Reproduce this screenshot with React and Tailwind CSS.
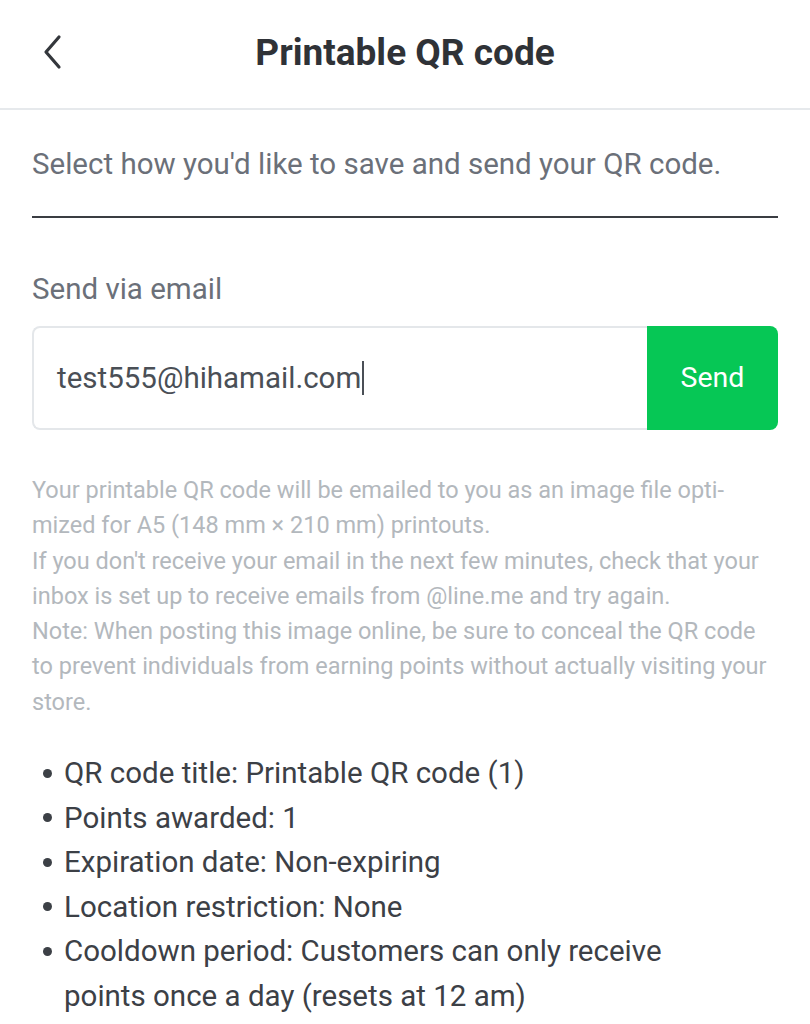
import React from 'react'

const items = [
  'QR code title: Printable QR code (1)',
  'Points awarded: 1',
  'Expiration date: Non-expiring',
  'Location restriction: None',
  'Cooldown period: Customers can only receive points once a day (resets at 12 am)',
]

export default function App() {
  return (
    <div className="min-h-screen w-[810px] bg-white font-['Roboto',sans-serif]">
      {/* Header */}
      <div className="relative flex h-[110px] items-center justify-center border-b-2 border-[#e6e9ec]">
        <button className="absolute left-[36px] top-[32px] flex h-[40px] w-[32px] items-center justify-center">
          <svg width="24" height="36" viewBox="0 0 24 36" fill="none">
            <path d="M19 3 L6 18 L19 33" stroke="#34373c" strokeWidth="3.2" strokeLinecap="round" strokeLinejoin="round" />
          </svg>
        </button>
        <h1 className="-mt-[3px] text-[37px] font-bold text-[#2f3237]">Printable QR code</h1>
      </div>

      <div className="px-8">
        <p className="border-b-2 border-[#3a3d42] pt-[36px] pb-[34px] text-[29.5px] leading-[36px] text-[#6b7079]">
          Select how you'd like to save and send your QR code.
        </p>

        <p className="mt-[53px] text-[29.5px] leading-[36px] text-[#6b7079]">Send via email</p>

        {/* Email input */}
        <div className="mt-[19px] flex h-[104px]">
          <div className="flex flex-1 items-center rounded-l-[8px] border-2 border-r-0 border-[#e4e7ea] pl-[23px]">
            <span className="text-[29.5px] text-[#4a4f56]">test555@hihamail.com</span>
            <span className="ml-[1px] h-[34px] w-[2px] bg-[#4a4f56]" />
          </div>
          <button className="flex w-[131px] items-center justify-center rounded-r-[8px] bg-[#06c755] text-[28.5px] text-white">
            Send
          </button>
        </div>

        {/* Help text */}
        <div className="mt-[43px] text-[23.5px] leading-[35.3px] text-[#b3b8bd]">
          <p>Your printable QR code will be emailed to you as an image file opti&shy;mized for A5 (148 mm × 210 mm) printouts.</p>
          <p>If you don't receive your email in the next few minutes, check that your inbox is set up to receive emails from @line.me and try again.</p>
          <p>Note: When posting this image online, be sure to conceal the QR code to prevent individuals from earning points without actually visiting your store.</p>
        </div>

        {/* Details list */}
        <ul className="mt-[31px] pr-[75px] text-[29.5px] leading-[44.5px] text-[#3c4046]">
          {items.map((text) => (
            <li key={text} className="flex">
              <span className="flex h-[44.5px] w-[32px] shrink-0 items-center pl-[11px]">
                <span className="h-[9px] w-[9px] rounded-full bg-[#3c4046]" />
              </span>
              <span>{text}</span>
            </li>
          ))}
        </ul>
      </div>
    </div>
  )
}
